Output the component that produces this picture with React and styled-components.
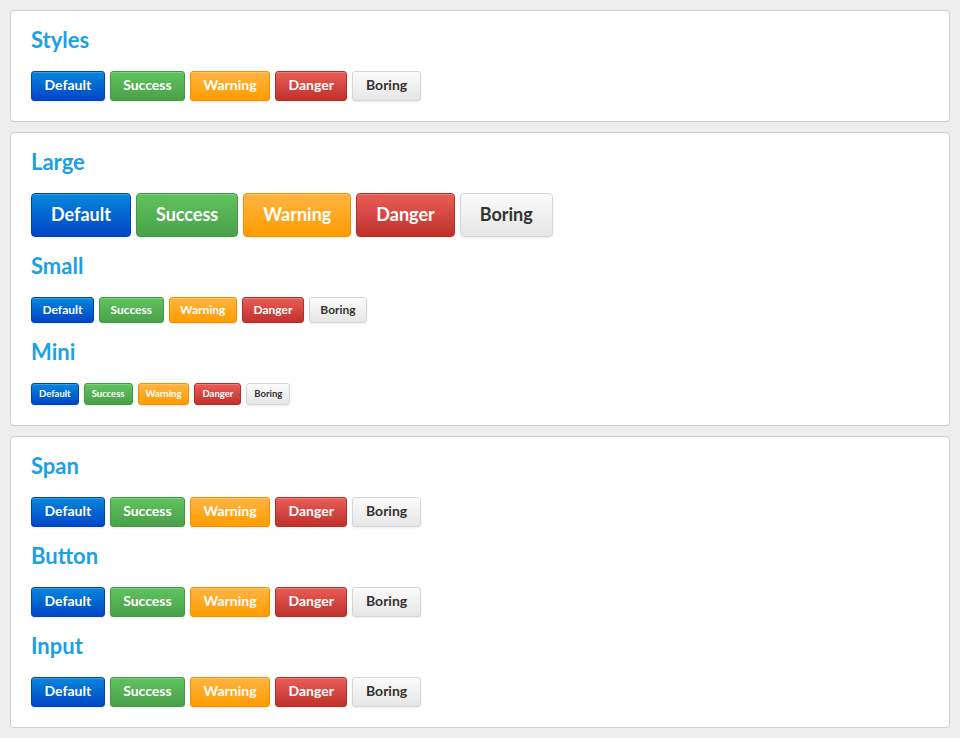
import React from "react";
import styled, { createGlobalStyle, css } from "styled-components";

const Global = createGlobalStyle`
  html, body { margin: 0; padding: 0; background: #eeeeee; }
  body { padding: 10px; font-family: Lato, "Open Sans", "Liberation Sans", sans-serif; }
`;

const Page = styled.div`
  display: flex;
  flex-direction: column;
  gap: 10px;
`;

const Panel = styled.section`
  background: #ffffff;
  border: 1px solid #cfcfcf;
  border-radius: 4px;
  padding: 17px 20px 20px;
  display: flex;
  flex-direction: column;
`;

const Heading = styled.h2`
  margin: 0 0 19px;
  font-size: 22px;
  line-height: 24px;
  font-weight: 700;
  color: #1ba1e2;
  & ~ & { margin-top: 17px; }
`;

const Row = styled.div`
  display: flex;
  gap: 5px;
  align-items: flex-start;
`;

const variants = {
  default: css`
    color: #fff;
    background: linear-gradient(#0787db, #0045c7);
    border-color: #0144b6;
  `,
  success: css`
    color: #fff;
    background: linear-gradient(#60c35e, #4aa04a);
    border-color: #449a44;
  `,
  warning: css`
    color: #fff;
    background: linear-gradient(#ffb443, #ff9c00);
    border-color: #f09000;
  `,
  danger: css`
    color: #fff;
    background: linear-gradient(#ea5d57, #bf322b);
    border-color: #b3302a;
  `,
  boring: css`
    color: #333;
    background: linear-gradient(#fbfbfb, #e6e6e6);
    border-color: #d6d6d6;
  `,
};

const sizes = {
  normal: css`height: 30px; padding: 0 12.5px 2px; font-size: 14px; border-radius: 3px;`,
  large: css`height: 44px; padding: 0 19px 2px; font-size: 18px; border-radius: 4px;`,
  small: css`height: 26px; padding: 0 10.5px 1px; font-size: 12px; border-radius: 3px;`,
  mini: css`height: 22px; padding: 0 7px 1px; font-size: 9.5px; border-radius: 3px;`,
};

const Btn = styled.button`
  box-sizing: border-box;
  display: inline-flex;
  align-items: center;
  justify-content: center;
  border: 1px solid;
  font-family: Lato, "Open Sans", "Liberation Sans", sans-serif;
  font-weight: 700;
  line-height: 1;
  cursor: pointer;
  box-shadow: inset 0 1px 0 rgba(255,255,255,0.2), 0 1px 2px rgba(0,0,0,0.08);
  ${(p) => variants[p.$variant]}
  ${(p) => sizes[p.$size]}
`;

const LABELS = [
  ["default", "Default"],
  ["success", "Success"],
  ["warning", "Warning"],
  ["danger", "Danger"],
  ["boring", "Boring"],
];

function ButtonRow({ size = "normal" }) {
  return (
    <Row>
      {LABELS.map(([v, l]) => (
        <Btn key={v} $variant={v} $size={size}>{l}</Btn>
      ))}
    </Row>
  );
}

export default function App() {
  return (
    <>
      <Global />
      <Page>
        <Panel>
          <Heading>Styles</Heading>
          <ButtonRow />
        </Panel>
        <Panel>
          <Heading>Large</Heading>
          <ButtonRow size="large" />
          <Heading>Small</Heading>
          <ButtonRow size="small" />
          <Heading>Mini</Heading>
          <ButtonRow size="mini" />
        </Panel>
        <Panel>
          <Heading>Span</Heading>
          <ButtonRow />
          <Heading>Button</Heading>
          <ButtonRow />
          <Heading>Input</Heading>
          <ButtonRow />
        </Panel>
      </Page>
    </>
  );
}
